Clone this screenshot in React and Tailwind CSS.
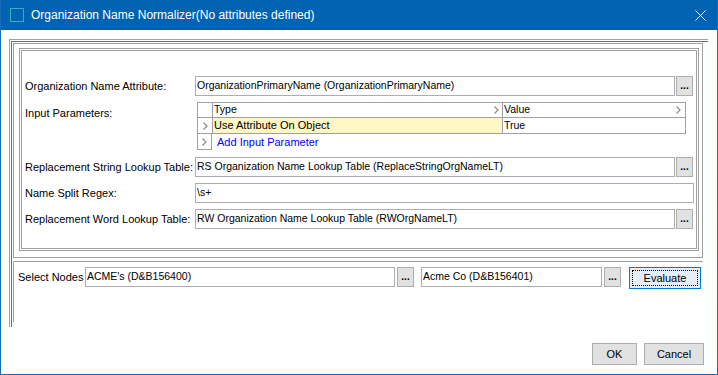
import React from 'react';

const font = "font-['Liberation_Sans',Arial,sans-serif]";

function Chevron({ className = '' }) {
  return (
    <svg width="5" height="8" viewBox="0 0 5 8" className={className}>
      <polyline points="0.5,0.5 4,4 0.5,7.5" fill="none" stroke="#8a8a8a" strokeWidth="1.2" />
    </svg>
  );
}

function TextBox({ value, w }) {
  return (
    <div
      className={`flex h-[20px] shrink-0 items-center overflow-hidden whitespace-nowrap border border-[#abadb3] bg-white pl-[1px] text-[10.5px] text-black ${w}`}
    >
      {value}
    </div>
  );
}

function Dots() {
  return (
    <div className="flex h-[20px] w-[17px] shrink-0 items-end justify-center border border-[#adadad] bg-[#e1e1e1] pb-[4px] text-[10px] font-bold leading-none text-black">
      ...
    </div>
  );
}

function Row({ label, children }) {
  return (
    <div className="flex h-[20px] items-center">
      <div className="w-[173px] shrink-0 pl-[3px] text-[11px] text-black">{label}</div>
      <div className="flex items-center gap-[1px]">{children}</div>
    </div>
  );
}

function ParamTable() {
  return (
    <div className="flex">
      <div className="w-[173px] shrink-0 pl-[3px] pt-[3px] text-[11px] text-black">Input Parameters:</div>
      <div className="ml-[2px] w-[489px] text-[10.5px] text-black">
        <div className="flex h-[16px] border border-[#a0a0a0]">
          <div className="w-[15px] border-r border-[#a0a0a0]" />
          <div className="flex w-[290px] items-center justify-between border-r border-[#a0a0a0] pl-[1px] pr-[3px]">
            <span>Type</span>
            <Chevron />
          </div>
          <div className="flex flex-1 items-center justify-between pl-[1px] pr-[4px]">
            <span>Value</span>
            <Chevron />
          </div>
        </div>
        <div className="flex h-[16px] border-x border-b border-[#a0a0a0]">
          <div className="flex w-[15px] items-center justify-center border-r border-[#a0a0a0]">
            <Chevron />
          </div>
          <div className="flex w-[290px] items-center border-r border-[#a0a0a0] bg-[#fdf7c4] pl-[1px] text-[11px]">Use Attribute On Object</div>
          <div className="flex flex-1 items-center pl-[1px]">True</div>
        </div>
        <div className="flex h-[16px]">
          <div className="flex w-[15px] items-center justify-center border-x border-b border-[#a0a0a0]">
            <Chevron />
          </div>
          <div className="flex items-center pl-[5px] text-[11px] text-[#0000ff]">Add Input Parameter</div>
        </div>
      </div>
    </div>
  );
}

function WinButton({ children, w }) {
  return (
    <div className={`flex h-[22px] items-center justify-center border border-[#adadad] bg-[#e1e1e1] text-[11px] text-black ${w}`}>
      {children}
    </div>
  );
}

export default function App() {
  return (
    <div className={`flex h-[375px] w-[718px] flex-col border-x border-b border-[#1a6bb5] bg-white ${font}`}>
      <div className="flex h-[30px] shrink-0 items-center bg-[#0063b1] pl-[9px] pr-[9px] text-white">
        <div className="h-[14px] w-[14px] border border-[#2fb0c4]" />
        <div className="ml-[7px] text-[12px]">Organization Name Normalizer(No attributes defined)</div>
        <svg width="11" height="11" viewBox="0 0 11 11" className="ml-auto mr-[2px]">
          <path d="M0.5 0.5 L10.5 10.5 M10.5 0.5 L0.5 10.5" stroke="white" strokeWidth="1" />
        </svg>
      </div>

      <div className="flex flex-1 flex-col pl-[8px] pt-[9px]">
        <div className="h-[288px] w-[699px] border-l border-t border-[#a0a0a0] pl-[1px] pt-[1px]">
          <div className="h-full w-full border-l border-t border-[#6d6d6d]">
            <div className="ml-[1px] mt-[1px] h-[215px] w-[690px] border border-[#a0a0a0]">
              <div className="ml-[5px] mt-[4px] h-[203px] w-[680px] border-[3px] border-double border-[#a0a0a0]">
                <div className="flex flex-col pt-[25px]">
                  <Row label="Organization Name Attribute:">
                    <TextBox w="w-[480px]" value="OrganizationPrimaryName (OrganizationPrimaryName)" />
                    <Dots />
                  </Row>
                  <div className="mt-[6px]">
                    <ParamTable />
                  </div>
                  <div className="mt-[7px]">
                    <Row label="Replacement String Lookup Table:">
                      <TextBox w="w-[480px]" value="RS Organization Name Lookup Table (ReplaceStringOrgNameLT)" />
                      <Dots />
                    </Row>
                  </div>
                  <div className="mt-[6px]">
                    <Row label="Name Split Regex:">
                      <TextBox w="w-[499px]" value="\s+" />
                    </Row>
                  </div>
                  <div className="mt-[6px]">
                    <Row label="Replacement Word Lookup Table:">
                      <TextBox w="w-[480px]" value="RW Organization Name Lookup Table (RWOrgNameLT)" />
                      <Dots />
                    </Row>
                  </div>
                </div>
              </div>
            </div>

            <div className="ml-[1px] mt-[3px] h-[61px] w-[690px] border-l border-t border-[#a0a0a0] pl-[4px] pt-[5px]">
              <div className="flex items-start">
                <div className="flex h-[20px] w-[67px] items-center text-[11px] text-black">Select Nodes</div>
                <TextBox w="w-[310px]" value="ACME's (D&B156400)" />
                <div className="ml-[2px]">
                  <Dots />
                </div>
                <div className="ml-[7px]">
                  <TextBox w="w-[181px]" value="Acme Co (D&B156401)" />
                </div>
                <div className="ml-[2px]">
                  <Dots />
                </div>
                <div className="ml-[8px] h-[22px] w-[72px] border border-[#0078d7] bg-[#e5eef6] p-[2px]">
                  <div className="flex h-full w-full items-center justify-center border border-dotted border-black text-[11px] text-black">
                    Evaluate
                  </div>
                </div>
              </div>
            </div>
          </div>
        </div>

        <div className="mt-[16px] flex justify-end gap-[7px] pr-[13px]">
          <WinButton w="w-[45px]">OK</WinButton>
          <WinButton w="w-[60px]">Cancel</WinButton>
        </div>
      </div>
    </div>
  );
}
